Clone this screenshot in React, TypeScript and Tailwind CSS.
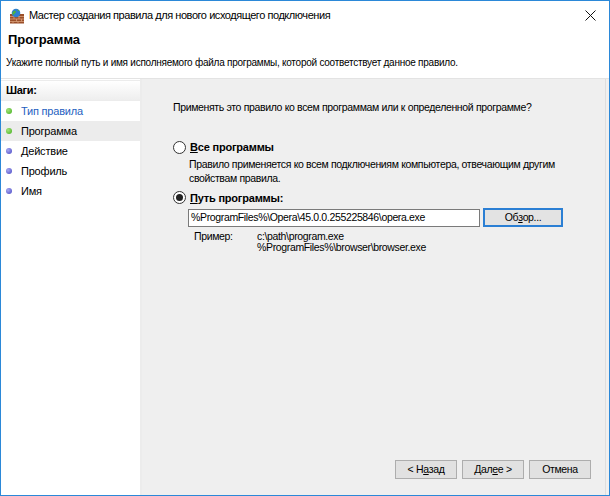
import React from "react";

function FirewallIcon() {
  return (
    <svg width="16" height="16" viewBox="0 0 16 16">
      <rect x="1" y="6" width="14" height="9.5" fill="#9a4f2a" />
      <g stroke="#d9a07a" strokeWidth="0.8">
        <line x1="1" y1="8.5" x2="15" y2="8.5" />
        <line x1="1" y1="11" x2="15" y2="11" />
        <line x1="1" y1="13.5" x2="15" y2="13.5" />
        <line x1="5" y1="8.5" x2="5" y2="11" />
        <line x1="10" y1="8.5" x2="10" y2="11" />
        <line x1="7.5" y1="11" x2="7.5" y2="13.5" />
        <line x1="12.5" y1="11" x2="12.5" y2="13.5" />
        <line x1="4" y1="13.5" x2="4" y2="15.5" />
        <line x1="9" y1="13.5" x2="9" y2="15.5" />
      </g>
      <circle cx="7" cy="5" r="4.3" fill="#2f7fd0" />
      <path d="M4.5 3.2c1-.6 2-.4 2.4.4.4.8-.5 1.4-1.2 1.8-.6.4-.4 1.4-1.3 1.4-.9 0-1.3-1-1-2 .2-.7.5-1.2 1.1-1.6z" fill="#4fb23a" />
      <path d="M8.2 1.6c.9.1 1.8.7 2.3 1.5-.5.3-1.2.2-1.6-.3-.3-.4-.6-.8-.7-1.2z" fill="#4fb23a" />
    </svg>
  );
}

function Radio({ checked }: { checked?: boolean }) {
  return (
    <span className="w-[13px] h-[13px] rounded-full border border-[#333333] bg-white flex items-center justify-center shrink-0">
      {checked && <span className="w-[7px] h-[7px] rounded-full bg-[#222222]" />}
    </span>
  );
}

function Dot({ color }: { color: "green" | "blue" }) {
  return (
    <span
      className={
        color === "green"
          ? "w-[6px] h-[6px] rounded-full bg-[radial-gradient(circle_at_35%_35%,#a6e37a,#3fae1c)]"
          : "w-[6px] h-[6px] rounded-full bg-[radial-gradient(circle_at_35%_35%,#a9a9f0,#4646c4)]"
      }
    />
  );
}

const steps: { label: string; done: boolean }[] = [
  { label: "Тип правила", done: true },
  { label: "Программа", done: true },
  { label: "Действие", done: false },
  { label: "Профиль", done: false },
  { label: "Имя", done: false },
];

export default function App() {
  return (
    <div className="w-[610px] h-[496px] border border-[#2b88d8] bg-white flex flex-col text-black font-['Liberation_Sans',sans-serif] overflow-hidden">
      {/* title bar */}
      <div className="h-[29px] flex items-center shrink-0">
        <div className="ml-[8px]">
          <FirewallIcon />
        </div>
        <span className="ml-[4px] text-[11px] tracking-[-0.45px]">
          Мастер создания правила для нового исходящего подключения
        </span>
        <svg className="ml-auto mr-[13px]" width="11" height="11" viewBox="0 0 11 11">
          <path d="M0.5 0.5L10.5 10.5M10.5 0.5L0.5 10.5" stroke="#111" strokeWidth="1" />
        </svg>
      </div>

      {/* header */}
      <div className="h-[49px] shrink-0 border-b border-[#e3e3e3] flex flex-col">
        <div className="ml-[7px] mt-[2px] text-[13px] font-bold leading-[16px]">Программа</div>
        <div className="ml-[5px] mt-[8px] text-[10px] leading-[14px] tracking-[-0.25px] whitespace-nowrap">
          Укажите полный путь и имя исполняемого файла программы, которой соответствует данное правило.
        </div>
      </div>

      {/* body */}
      <div className="flex-1 flex bg-[#f0f0f0] min-h-0">
        <div className="w-[141px] bg-white border-r-2 border-[#ececec] flex flex-col">
          <div className="h-[21px] mt-[1px] border-t border-b border-[#ececec] bg-gradient-to-b from-white to-[#eeeeee] flex items-center pl-[5px] text-[11px] font-bold tracking-[-0.3px]">
            Шаги:
          </div>
          <div className="flex flex-col">
            {steps.map((s, i) => (
              <div
                key={s.label}
                className={`h-[20px] flex items-center pl-[5px] text-[11px] tracking-[-0.2px] ${
                  i === 1 ? "bg-[#ececec]" : ""
                } ${i === 0 ? "text-[#1f5fbf]" : ""}`}
              >
                <Dot color={s.done ? "green" : "blue"} />
                <span className="ml-[9px]">{s.label}</span>
              </div>
            ))}
          </div>
        </div>

        <div className="flex-1 bg-[#efefef] border-r border-[#dedede] mr-[3px] flex flex-col text-[10.5px] tracking-[-0.35px]">
          <div className="ml-[31px] mt-[21px] leading-[14px] whitespace-nowrap">
            Применять это правило ко всем программам или к определенной программе?
          </div>

          <div className="ml-[31px] mt-[25px] flex items-center">
            <Radio />
            <span className="ml-[4px] font-bold text-[11px] tracking-[-0.2px]">
              <span className="underline">В</span>се программы
            </span>
          </div>
          <div className="ml-[47px] mt-[1px] leading-[14px] whitespace-nowrap">
            <div>Правило применяется ко всем подключениям компьютера, отвечающим другим</div>
            <div>свойствам правила.</div>
          </div>

          <div className="ml-[31px] mt-[5px] flex items-center">
            <Radio checked />
            <span className="ml-[4px] font-bold text-[11px] tracking-[-0.2px]">
              <span className="underline">П</span>уть программы:
            </span>
          </div>

          <div className="ml-[46px] mt-[2px] flex items-center">
            <div className="w-[292px] h-[18px] border border-[#7a7a7a] bg-white flex items-center pl-[2px] text-[10.5px] whitespace-nowrap">
              %ProgramFiles%\Opera\45.0.0.255225846\opera.exe
            </div>
            <div className="ml-[3px] w-[80px] h-[19px] border-2 border-[#2b7fd4] bg-[#e3e3e3] flex items-center justify-center">
              Об<span className="underline">з</span>ор...
            </div>
          </div>

          <div className="ml-[52px] mt-[4px] flex leading-[11px]">
            <div className="w-[63px]">Пример:</div>
            <div>
              <div>c:\path\program.exe</div>
              <div>%ProgramFiles%\browser\browser.exe</div>
            </div>
          </div>

          <div className="mt-auto mb-[16px] flex justify-end mr-[14px] gap-[5px]">
            <div className="w-[62px] h-[19px] border border-[#adadad] bg-[#e1e1e1] flex items-center justify-center">
              &lt; Н<span className="underline">а</span>зад
            </div>
            <div className="w-[62px] h-[19px] border border-[#adadad] bg-[#e1e1e1] flex items-center justify-center">
              Дал<span className="underline">е</span>е &gt;
            </div>
            <div className="w-[62px] h-[19px] border border-[#adadad] bg-[#e1e1e1] flex items-center justify-center">
              Отмена
            </div>
          </div>
        </div>
      </div>
    </div>
  );
}
